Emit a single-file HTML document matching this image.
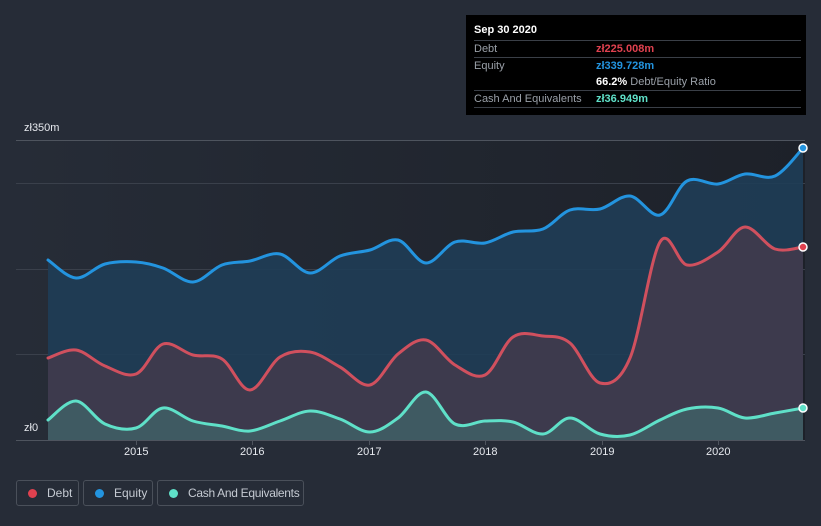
<!DOCTYPE html><html><head><meta charset="utf-8"><style>
body{margin:0;width:821px;height:526px;background:#262c37;font-family:"Liberation Sans",sans-serif;overflow:hidden;position:relative}
.tt{position:absolute;left:466px;top:15px;width:340px;height:100px;background:#000;color:#fff;font-size:11px}
.tt .r{position:absolute;left:8px;width:327px;border-top:1px solid #3a3f47;height:17px;line-height:17px;color:#9aa0a8}
.tt b{font-weight:bold}
.v{position:absolute;left:122px}
.leg{position:absolute;top:480px;height:26px;border:1px solid #4a505a;border-radius:3px;color:#c5cad2;font-size:12px;line-height:24px;box-sizing:border-box;white-space:nowrap;overflow:hidden}
.leg i{display:inline-block;width:9px;height:9px;border-radius:50%;margin:0 10px 0 11px;vertical-align:-1px}
.ax{position:absolute;color:#e6e9ee;font-size:11px}
</style></head><body>
<svg width="821" height="526" style="position:absolute;left:0;top:0">
<defs><linearGradient id="bg" x1="0" x2="1"><stop offset="0" stop-color="#262c37"/><stop offset="1" stop-color="#1d2129"/></linearGradient></defs>
<rect x="16" y="140" width="789" height="300" fill="url(#bg)"/>
<g stroke="#3a404b" stroke-width="1"><line x1="16" y1="140.5" x2="805" y2="140.5" stroke="#4e545e"/><line x1="16" y1="183.5" x2="805" y2="183.5"/><line x1="16" y1="269.5" x2="805" y2="269.5"/><line x1="16" y1="354.5" x2="805" y2="354.5"/><line x1="16" y1="440.5" x2="805" y2="440.5" stroke="#4e545e"/></g>
<path id="ea" fill="#1f3d57" fill-opacity="0.9"/>
<path id="da" fill="#3d3a4d"/>
<path id="ca" fill="#3f5a62"/>
<g fill="none" stroke-width="3" stroke-linejoin="round" stroke-linecap="round">
<path id="el" stroke="#2394df"/><path id="dl" stroke="#d0505e"/><path id="cl" stroke="#5fe0c8"/>
</g>
<g stroke="#fff" stroke-width="1.5"><circle cx="803" cy="148" r="4" fill="#2394df"/><circle cx="803" cy="247" r="4" fill="#e0414f"/><circle cx="803" cy="408" r="4" fill="#5fe0c8"/></g>
<g stroke="#4e545e"><line x1="136.5" y1="440" x2="136.5" y2="445"/><line x1="252.5" y1="440" x2="252.5" y2="445"/><line x1="369.5" y1="440" x2="369.5" y2="445"/><line x1="485.5" y1="440" x2="485.5" y2="445"/><line x1="602.5" y1="440" x2="602.5" y2="445"/><line x1="718.5" y1="440" x2="718.5" y2="445"/></g>
</svg>
<script>
var X=[48,76,105,136,163,193,222,250,280,310,340,370,398,426,455,485,513,543,570,600,630,660,687,718,745,775,803];
var E=[260,278,264,262,268,282,265,261,254,273,256,250,240,263,242,243,232,229,210,209,196,215,181,184,174,176,148];
var D=[358,350,366,374,344,355,359,390,357,352,367,385,354,340,365,375,337,336,343,383,358,242,265,252,227,249,247];
var C=[420,401,424,428,408,421,426,431,421,411,419,432,418,392,424,421,422,434,418,434,435,420,409,408,418,413,408];
function sp(Y){var d="M"+X[0]+","+Y[0];for(var i=0;i<X.length-1;i++){var p0=i?i-1:i,p3=i+2<X.length?i+2:i+1;var c1x=X[i]+(X[i+1]-X[p0])/6,c1y=Y[i]+(Y[i+1]-Y[p0])/6,c2x=X[i+1]-(X[p3]-X[i])/6,c2y=Y[i+1]-(Y[p3]-Y[i])/6;d+="C"+c1x+","+c1y+" "+c2x+","+c2y+" "+X[i+1]+","+Y[i+1];}return d;}
[["e",E],["d",D],["c",C]].forEach(function(a){var l=sp(a[1]);document.getElementById(a[0]+"l").setAttribute("d",l);document.getElementById(a[0]+"a").setAttribute("d",l+"L803,440L48,440Z");});
</script>
<div class="ax" style="left:24px;top:122px">zł350m</div>
<div class="ax" style="left:24px;top:422px">zł0</div>
<div class="ax" style="left:124px;top:446px">2015</div>
<div class="ax" style="left:240px;top:446px">2016</div>
<div class="ax" style="left:357px;top:446px">2017</div>
<div class="ax" style="left:473px;top:446px">2018</div>
<div class="ax" style="left:590px;top:446px">2019</div>
<div class="ax" style="left:706px;top:446px">2020</div>
<div class="tt">
<div style="position:absolute;left:8px;top:9px;font-weight:bold;font-size:11px">Sep 30 2020</div>
<div class="r" style="top:25px">Debt<span class="v" style="color:#e0414f;font-weight:bold">zł225.008m</span></div>
<div class="r" style="top:42px">Equity<span class="v" style="color:#2394df;font-weight:bold">zł339.728m</span></div>
<div class="r" style="top:59px;border:0"><span class="v"><b style="color:#fff">66.2%</b> Debt/Equity Ratio</span></div>
<div class="r" style="top:75px">Cash And Equivalents<span class="v" style="color:#5fe0c8;font-weight:bold">zł36.949m</span></div>
<div class="r" style="top:92px;height:0"></div>
</div>
<div class="leg" style="left:16px;width:63px"><i style="background:#e0414f"></i>Debt</div>
<div class="leg" style="left:83px;width:70px"><i style="background:#2394df"></i>Equity</div>
<div class="leg" style="left:157px;width:147px;letter-spacing:-0.3px"><i style="background:#5fe0c8"></i>Cash And Equivalents</div>
</body></html>
